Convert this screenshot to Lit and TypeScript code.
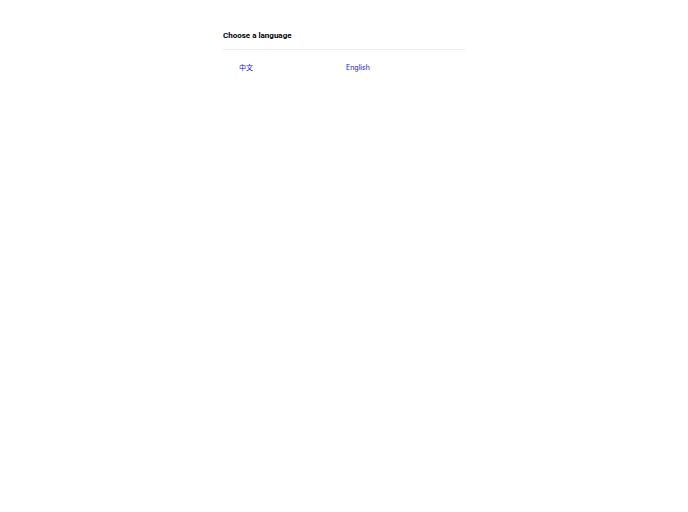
import { css, html, LitElement } from "lit";
import { customElement, property } from "lit/decorators.js";

interface Language {
  code: string;
  label: string;
}

@customElement("language-picker")
export class LanguagePicker extends LitElement {
  @property() public languages: Language[] = [];
  @property({ type: String }) public heading = "";

  render() {
    return html`
      <h1 class="heading">${this.heading}</h1>
      <ul class="languages">
        ${this.languages.map(
          (language) => html`
            <li>
              <a class="link" href="#${language.code}" lang=${language.code}
                >${language.label}</a
              >
            </li>
          `
        )}
      </ul>
    `;
  }

  static styles = css`
    :host {
      display: block;
    }

    .heading {
      border-bottom: 1px solid #eee;
      color: #000;
      font-family: Roboto, "Liberation Sans", sans-serif;
      font-size: 8px;
      font-weight: bold;
      line-height: 10px;
      margin: 0;
      padding-bottom: 8px;
    }

    .languages {
      display: grid;
      font-size: 7px;
      grid-template-columns: 1fr 1fr;
      line-height: 10px;
      list-style: none;
      margin: 0;
      padding: 13px 12px 0 16px;
    }

    .link {
      color: #1a0fd0;
      text-decoration: none;
    }
  `;
}

@customElement("app-root")
export class AppRoot extends LitElement {
  private languages: Language[] = [
    { code: "zh", label: "中文" },
    { code: "en", label: "English" },
  ];

  render() {
    return html`
      <main class="page">
        <language-picker
          class="picker"
          heading="Choose a language"
          .languages=${this.languages}
        ></language-picker>
      </main>
    `;
  }

  static styles = css`
    :host {
      background-color: #fff;
      display: block;
      font-family: Inter, "Liberation Sans", "Noto Sans CJK SC", sans-serif;
      min-height: 100vh;
    }

    .page {
      display: flex;
      justify-content: center;
      padding: 31px 16px;
    }

    .picker {
      flex: 0 1 242px;
    }
  `;
}
